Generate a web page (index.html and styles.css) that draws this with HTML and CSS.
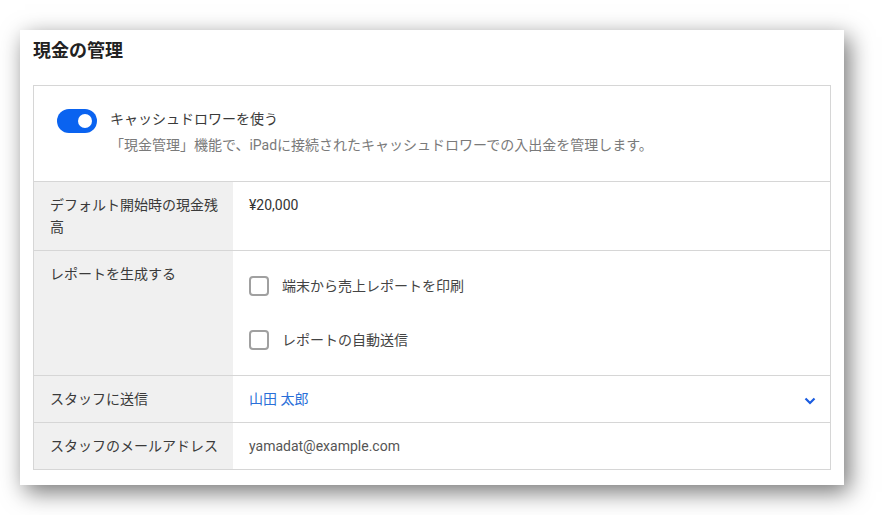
FILE: index.html
```html
<!DOCTYPE html>
<html lang="ja">
<head>
<meta charset="utf-8">
<title>現金の管理</title>
<link rel="stylesheet" href="styles.css">
</head>
<body>
<div class="card">
  <h2 class="title">現金の管理</h2>
  <div class="box">
    <div class="toggle-section">
      <span class="toggle"><span class="knob"></span></span>
      <div class="toggle-text">
        <div class="toggle-label">キャッシュドロワーを使う</div>
        <div class="toggle-desc">「現金管理」機能で、iPadに接続されたキャッシュドロワーでの入出金を管理します。</div>
      </div>
    </div>
    <div class="row">
      <div class="label">デフォルト開始時の現金残高</div>
      <div class="value">¥20,000</div>
    </div>
    <div class="row">
      <div class="label">レポートを生成する</div>
      <div class="value checks">
        <label class="check"><span class="box-icon"></span>端末から売上レポートを印刷</label>
        <label class="check"><span class="box-icon"></span>レポートの自動送信</label>
      </div>
    </div>
    <div class="row">
      <div class="label">スタッフに送信</div>
      <div class="value select">
        <span class="link">山田 太郎</span>
        <svg class="chev" width="12" height="8" viewBox="0 0 12 8"><path d="M1.5 1.5 L6 6 L10.5 1.5" fill="none" stroke="#1a5ce0" stroke-width="2.2"/></svg>
      </div>
    </div>
    <div class="row last">
      <div class="label">スタッフのメールアドレス</div>
      <div class="value email">yamadat@example.com</div>
    </div>
  </div>
</div>
</body>
</html>
```
FILE: styles.css
```css
html, body {
  margin: 0;
  padding: 0;
  background: #ffffff;
}
body {
  padding: 30px 40px 30px 20px;
  font-family: Roboto, "Noto Sans CJK JP", sans-serif;
  font-size: 14px;
  color: #333;
}
.card {
  width: 824px;
  height: 455px;
  box-sizing: border-box;
  background: #fff;
  padding: 0 13px;
  box-shadow: 5px 7px 22px rgba(0, 0, 0, 0.55);
}
.title {
  margin: 0;
  padding: 10px 0 0;
  height: 45px;
  font-size: 18px;
  line-height: 22px;
  font-weight: 700;
  color: #222;
}
.box {
  border: 1px solid #d6d6d6;
}
.toggle-section {
  display: flex;
  gap: 13px;
  padding: 22px 24px 25px 23px;
  border-bottom: 1px solid #d6d6d6;
}
.toggle {
  position: relative;
  flex: none;
  width: 40px;
  height: 24px;
  margin-top: 1px;
  border-radius: 12px;
  background: #0a63f0;
}
.knob {
  position: absolute;
  right: 5px;
  top: 5px;
  width: 14px;
  height: 14px;
  border-radius: 50%;
  background: #fff;
}
.toggle-label {
  line-height: 22px;
  color: #3a3a3a;
}
.toggle-desc {
  margin-top: 4px;
  line-height: 22px;
  color: #7a7a7a;
}
.row {
  display: grid;
  grid-template-columns: 199px 1fr;
  border-bottom: 1px solid #d6d6d6;
}
.row.last {
  border-bottom: none;
}
.label {
  background: #f0f0f0;
  padding: 12px 10px 12px 16px;
  line-height: 22px;
  color: #3a3a3a;
}
.value {
  padding: 12px 16px;
  line-height: 22px;
  color: #333;
}
.checks {
  display: flex;
  flex-direction: column;
  gap: 8px;
}
.check {
  display: flex;
  align-items: center;
  gap: 13px;
  padding: 12px 0;
  line-height: 22px;
  color: #444;
}
.box-icon {
  width: 16px;
  height: 16px;
  border: 2px solid #a0a0a0;
  border-radius: 4px;
  flex: none;
}
.select {
  display: flex;
  align-items: center;
  justify-content: space-between;
  padding-right: 14px;
}
.link {
  color: #2a6fd8;
}
.chev {
  margin-top: 4px;
}
.email {
  color: #555;
}
```
